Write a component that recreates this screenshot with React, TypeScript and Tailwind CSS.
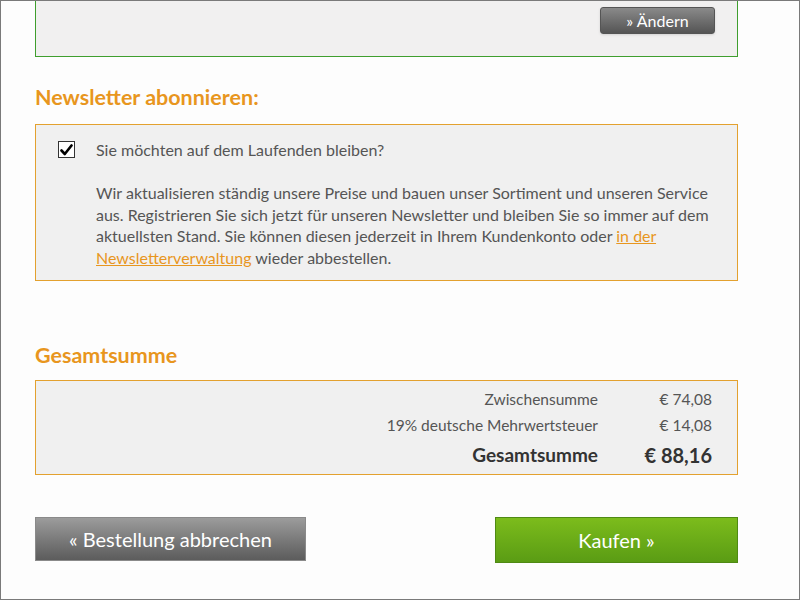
import React from "react";

export default function App() {
  return (
    <div className="w-[800px] h-[600px] overflow-hidden bg-[#fdfdfd] border border-[#7a7a7a] font-['Lato',sans-serif] text-[#555]">
      <div className="pl-[34px] pr-[61px]">
        {/* top green box, cut off */}
        <div className="h-[56px] border-x border-b border-[#3f9e2e] bg-[#f1f0f0] flex justify-end items-start pt-[6px] pr-[22px]">
          <button className="w-[115px] h-[27px] rounded-[3px] border border-[#555] bg-gradient-to-b from-[#8a8a8a] to-[#555] text-white text-[16px] leading-none shadow-sm">
            » Ändern
          </button>
        </div>

        <h2 className="mt-[26px] mb-[13px] text-[21.5px] leading-[28px] font-bold text-[#e8961e]">
          Newsletter abonnieren:
        </h2>

        <div className="border border-[#e3a12f] bg-[#f0f0f0] pt-[14px] pb-[12px] pl-[22px] pr-[20px] flex">
          <div className="w-[38px] shrink-0 pt-[2px]">
            <div className="w-[17px] h-[17px] border border-[#333] bg-white flex items-center justify-center">
              <svg width="13" height="12" viewBox="0 0 13 12">
                <path d="M1.5 6.5 L4.8 10 L11.5 1.5" stroke="#000" strokeWidth="2.6" fill="none" strokeLinecap="round" strokeLinejoin="round" />
              </svg>
            </div>
          </div>
          <div className="text-[16px] leading-[21.5px]">
            <p className="leading-[22px]">Sie möchten auf dem Laufenden bleiben?</p>
            <p className="mt-[21px]">
              Wir aktualisieren ständig unsere Preise und bauen unser Sortiment und unseren Service aus. Registrieren Sie sich jetzt für unseren Newsletter und bleiben Sie so immer auf dem aktuellsten Stand. Sie können diesen jederzeit in Ihrem Kundenkonto oder{" "}
              <a className="text-[#e8961e] underline">in der</a>{" "}
              <a className="text-[#e8961e] underline">Newsletterverwaltung</a> wieder abbestellen.
            </p>
          </div>
        </div>

        <h2 className="mt-[60px] mb-[11px] text-[21.5px] leading-[28px] font-bold text-[#e8961e]">
          Gesamtsumme
        </h2>

        <div className="border border-[#e3a12f] bg-[#f0f0f0] pt-[6px] pb-[3px] pr-[25px] text-[15.5px]">
          <div className="flex justify-end items-center h-[25px]">
            <span>Zwischensumme</span>
            <span className="w-[114px] text-right">€ 74,08</span>
          </div>
          <div className="flex justify-end items-center h-[27px]">
            <span>19% deutsche Mehrwertsteuer</span>
            <span className="w-[114px] text-right">€ 14,08</span>
          </div>
          <div className="flex justify-end items-center h-[32px] text-[#333] font-bold text-[19px]">
            <span>Gesamtsumme</span>
            <span className="w-[114px] text-right text-[20px]">€ 88,16</span>
          </div>
        </div>

        <div className="mt-[42px] flex justify-between">
          <button className="w-[271px] h-[44px] border border-[#8a8a8a] bg-gradient-to-b from-[#9c9c9c] to-[#5c5c5c] text-white text-[20px]">
            « Bestellung abbrechen
          </button>
          <button className="w-[243px] h-[46px] border border-[#4f8a14] bg-gradient-to-b from-[#7cbc1c] to-[#5a9c14] text-white text-[20px]">
            Kaufen »
          </button>
        </div>
      </div>
    </div>
  );
}
